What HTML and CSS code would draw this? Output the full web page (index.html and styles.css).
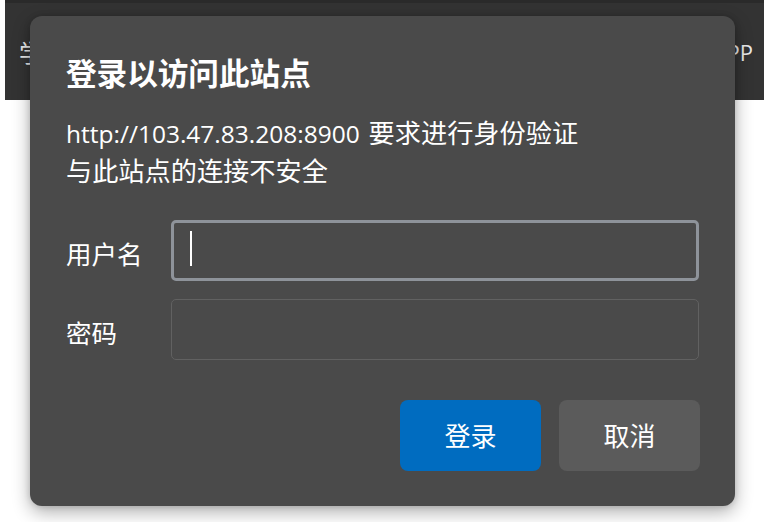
FILE: index.html
```html
<!DOCTYPE html>
<html lang="zh-CN">
<head>
<meta charset="utf-8">
<title>登录以访问此站点</title>
<link rel="stylesheet" href="styles.css">
</head>
<body>
<div class="page">
  <header class="topbar">
    <span class="brand">学</span>
    <span class="app">APP</span>
  </header>
  <main class="content"></main>
</div>
<div class="dialog" role="dialog" aria-labelledby="dlg-title">
  <h1 class="title" id="dlg-title">登录以访问此站点</h1>
  <p class="desc"><span class="url">http://103.47.83.208:8900</span> 要求进行身份验证<br>与此站点的连接不安全</p>
  <div class="form">
    <label class="label">用户名</label>
    <div class="field focused"><span class="caret"></span></div>
    <label class="label">密码</label>
    <div class="field"></div>
  </div>
  <div class="actions">
    <button class="btn primary">登录</button>
    <button class="btn secondary">取消</button>
  </div>
</div>
</body>
</html>
```
FILE: styles.css
```css
* { box-sizing: border-box; }
html, body { margin: 0; height: 100%; }
body {
  background: #ffffff;
  font-family: "Open Sans", "Noto Sans CJK SC", sans-serif;
  color: #ffffff;
  overflow: hidden;
}
.page {
  margin-left: 5px;
  height: 100%;
  display: flex;
  flex-direction: column;
}
.topbar {
  height: 100px;
  background: #333333;
  border-top: 3px solid #2a2a2a;
  display: flex;
  align-items: center;
  justify-content: space-between;
  padding: 0 11px 0 14px;
  color: #e8e8e8;
}
.brand {
  font-family: "Noto Sans CJK SC", sans-serif;
  font-size: 24px;
}
.app {
  font-family: "Open Sans", sans-serif;
  font-size: 22px;
}
.content { flex: 1; background: #ffffff; }

.dialog {
  position: absolute;
  left: 30px;
  top: 16px;
  width: 705px;
  height: 490px;
  background: #4a4a4a;
  border-radius: 12px;
  box-shadow: 0 6px 18px rgba(0, 0, 0, 0.32), 0 0 6px rgba(0,0,0,0.15);
  padding: 36px 35px 35px 36px;
  display: flex;
  flex-direction: column;
}
.title {
  margin: 0;
  font-family: "Noto Sans CJK SC", sans-serif;
  font-weight: 700;
  font-size: 30.6px;
  line-height: 40px;
  height: 40px;
}
.desc {
  margin: 22px 0 0 0;
  font-family: "Noto Sans CJK SC", sans-serif;
  font-size: 26.2px;
  line-height: 36px;
}
.url {
  font-family: "Open Sans", sans-serif;
  font-size: 24.5px;
  margin-right: 3px;
}
.form {
  margin-top: 32px;
  display: grid;
  grid-template-columns: 105px 1fr;
  row-gap: 18px;
  padding-right: 1px;
}
.label {
  font-family: "Noto Sans CJK SC", sans-serif;
  font-size: 25.5px;
  line-height: 36px;
  align-self: center;
  padding-top: 5px;
}
.field {
  height: 61px;
  border: 1px solid #616161;
  border-radius: 5px;
  background: #4a4a4a;
  display: flex;
  align-items: center;
  padding-left: 16px;
}
.field.focused {
  border: 3px solid #8e939a;
}
.caret {
  width: 2px;
  height: 35px;
  background: #ffffff;
  margin-top: -5px;
}
.actions {
  margin-top: 40px;
  display: flex;
  justify-content: flex-end;
  gap: 18px;
}
.btn {
  width: 141px;
  height: 71px;
  border: none;
  border-radius: 8px;
  font-family: "Noto Sans CJK SC", sans-serif;
  font-size: 26px;
  color: #ffffff;
  padding: 0;
  padding-bottom: 2px;
}
.primary { background: #006cc0; }
.secondary { background: #5b5b5b; }
```
